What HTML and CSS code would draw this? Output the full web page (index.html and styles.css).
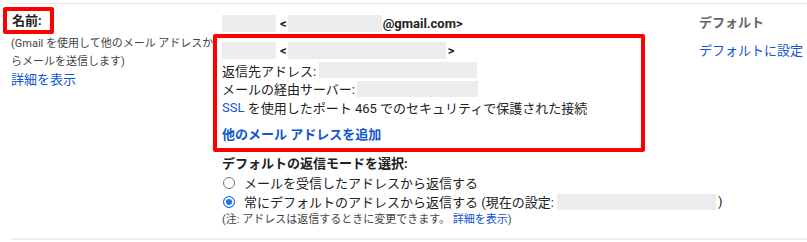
FILE: index.html
```html
<!DOCTYPE html>
<html lang="ja">
<head>
    <meta charset="UTF-8">
    <title>アカウントとインポート - 名前</title>
    <link rel="stylesheet" href="styles.css">
</head>
<body>
    <div class="settings-row">
        <div class="col-label">
            <div class="label-name">名前:</div>
            <div class="label-desc">(Gmail を使用して他のメール アドレスか<br>らメールを送信します)</div>
            <a class="link detail-link" href="#">詳細を表示</a>
        </div>

        <div class="col-main">
            <div class="line from-line">
                <span class="redact r-name"></span>&lt;<span class="redact r-addr"></span>@gmail.com&gt;
            </div>

            <!-- highlighted block -->
            <div class="highlight">
                <div class="line from-line">
                    <span class="redact r-name"></span>&lt;<span class="redact r-addr-long"></span>&gt;
                </div>
                <div class="line detail-line">返信先アドレス:<span class="redact r-reply"></span></div>
                <div class="line detail-line">メールの経由サーバー:<span class="redact r-server"></span></div>
                <div class="line detail-line"><a class="link" href="#">SSL</a>&nbsp;を使用したポート 465 でのセキュリティで保護された接続</div>
                <a class="link add-link" href="#">他のメール アドレスを追加</a>
            </div>

            <div class="reply-title">デフォルトの返信モードを選択:</div>
            <div class="line radio-line"><span class="radio"></span>メールを受信したアドレスから返信する</div>
            <div class="line radio-line"><span class="radio checked"></span>常にデフォルトのアドレスから返信する (現在の設定:&nbsp;<span class="redact r-current"></span>)</div>
            <div class="note">(注: アドレスは返信するときに変更できます。 <a class="link" href="#">詳細を表示</a>)</div>
        </div>

        <div class="col-side">
            <div class="side-title">デフォルト</div>
            <a class="link side-link" href="#">デフォルトに設定</a>
        </div>
    </div>
</body>
</html>
```

FILE: styles.css
```css
body {
    margin: 0;
    font-family: Roboto, "Noto Sans CJK JP", sans-serif;
    font-size: 13px;
    color: #222;
    background: #fff;
}

.link {
    color: #15c;
    text-decoration: none;
}

.settings-row {
    margin: 3px 0 0 11px;
    border-top: 1px solid #e5e5e5;
    border-bottom: 2px solid #efefef;
    display: grid;
    grid-template-columns: 202px 486px 1fr;
}

/* left column */
.col-label {
    padding-top: 3px;
    white-space: nowrap;
}

.label-name {
    width: fit-content;
    margin-left: -8px;
    border: 4px solid #f00;
    border-radius: 2px;
    padding: 1px 8px 1px 5px;
    font-weight: bold;
    line-height: 17px;
}

.label-desc {
    margin-top: 1px;
    font-size: 11px;
    line-height: 18px;
    color: #444;
}

.detail-link {
    display: block;
    line-height: 18px;
}

/* middle column */
.col-main {
    padding: 9px 0 9px 0;
}

.line {
    display: flex;
    align-items: center;
    white-space: nowrap;
    padding-left: 9px;
}

.from-line {
    height: 21px;
    font-weight: bold;
}

.redact {
    display: inline-block;
    flex-shrink: 0;
    height: 17px;
    background: #ececec;
}

.r-name { width: 54px; margin-right: 4px; }
.r-addr { width: 94px; margin-left: 1px; margin-right: 1px; }
.r-addr-long { width: 158px; margin-left: 1px; margin-right: 2px; }
.r-reply { width: 158px; margin-left: 3px; height: 16px; }
.r-server { width: 121px; margin-left: 2px; height: 16px; }
.r-current { width: 159px; height: 16px; margin-right: 2px; }

.highlight {
    position: relative;
    width: 432px;
    box-sizing: border-box;
    background: #fff;
    border: 4px solid #f00;
    border-radius: 2px;
    padding: 1px 0 4.5px 5px;
}

.highlight .line {
    padding-left: 0;
}

.highlight .from-line {
    height: 22px;
}

.detail-line {
    height: 18.5px;
}

.add-link {
    display: block;
    margin-top: 8px;
    line-height: 19px;
    font-weight: bold;
}

.reply-title {
    margin-top: 3px;
    padding-left: 9px;
    line-height: 18px;
    font-weight: bold;
}

.radio-line {
    height: 19px;
}

.radio {
    width: 10px;
    height: 10px;
    border: 1px solid #757575;
    border-radius: 50%;
    margin: 0 9px 0 1px;
    flex-shrink: 0;
}

.radio.checked {
    border-color: #1a73e8;
    background: #1a73e8;
    box-shadow: inset 0 0 0 2px #fff;
}

.note {
    padding-left: 9px;
    font-size: 11px;
    line-height: 18px;
    color: #444;
}

/* right column */
.col-side {
    padding-top: 9px;
    white-space: nowrap;
}

.side-title {
    line-height: 19px;
    font-weight: bold;
    color: #666;
}

.side-link {
    display: block;
    margin-top: 9px;
    line-height: 19px;
}
```
